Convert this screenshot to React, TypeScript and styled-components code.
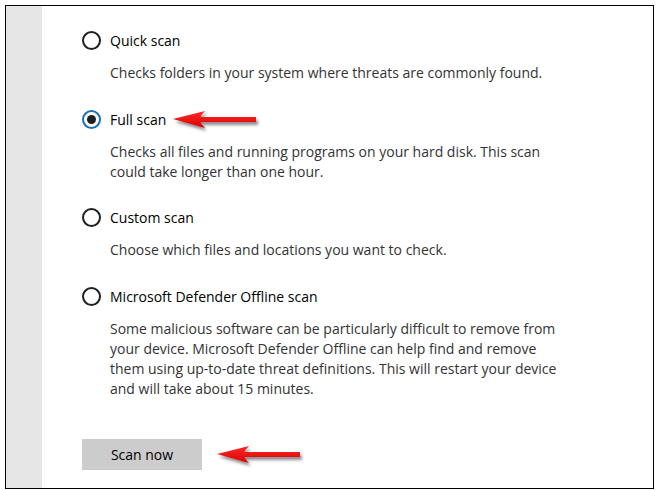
import React from "react";
import styled, { createGlobalStyle } from "styled-components";

const Global = createGlobalStyle`
  html, body { margin: 0; padding: 0; background: #ffffff; }
  body { font-family: "Open Sans", "Noto Sans", sans-serif; }
`;

const Frame = styled.div`
  position: relative;
  box-sizing: border-box;
  margin: 5px 0 0 5px;
  width: 649px;
  height: 484px;
  border: 1px solid #000;
  display: flex;
  background: #fff;
  overflow: hidden;
`;

const Strip = styled.div`
  width: 36px;
  flex: none;
  background: #e6e6e6;
`;

const Content = styled.div`
  flex: 1;
  display: flex;
  flex-direction: column;
  align-items: flex-start;
  padding: 19px 0 0 40px;
`;

const Option = styled.div<{ $gap: number }>`
  display: flex;
  flex-direction: column;
  margin-bottom: ${(p) => p.$gap}px;
`;

const Row = styled.label`
  display: flex;
  align-items: center;
  gap: 9px;
  height: 30px;
  font-size: 14px;
  color: #000;
`;

const Radio = styled.span<{ $checked?: boolean }>`
  box-sizing: border-box;
  width: 19px;
  height: 19px;
  border-radius: 50%;
  border: 2px solid ${(p) => (p.$checked ? "#1a6fb5" : "#1f1f1f")};
  display: flex;
  align-items: center;
  justify-content: center;
  flex: none;
  &::after {
    content: "";
    display: ${(p) => (p.$checked ? "block" : "none")};
    width: 9px;
    height: 9px;
    border-radius: 50%;
    background: #1f1f1f;
  }
`;

const Desc = styled.p`
  margin: 8px 0 0 28px;
  font-size: 14px;
  line-height: 20px;
  color: #333;
  width: 470px;
`;

const ScanButton = styled.button`
  margin-top: 40px;
  width: 120px;
  height: 31px;
  border: none;
  background: #cccccc;
  font-family: "Open Sans", "Noto Sans", sans-serif;
  font-size: 14px;
  color: #000;
  padding: 0;
`;

const ArrowWrap = styled.svg<{ $x: number; $y: number }>`
  position: absolute;
  left: ${(p) => p.$x}px;
  top: ${(p) => p.$y}px;
  overflow: visible;
`;

function Arrow({ x, y }: { x: number; y: number }) {
  return (
    <ArrowWrap $x={x} $y={y} width="90" height="24" viewBox="0 0 90 24">
      <defs>
        <filter id={`sh${x}`} x="-20%" y="-50%" width="140%" height="200%">
          <feGaussianBlur in="SourceAlpha" stdDeviation="1.6" />
          <feOffset dx="2" dy="3" result="b" />
          <feComponentTransfer>
            <feFuncA type="linear" slope="0.45" />
          </feComponentTransfer>
          <feMerge>
            <feMergeNode />
            <feMergeNode in="SourceGraphic" />
          </feMerge>
        </filter>
        <linearGradient id={`g${x}`} x1="0" y1="0" x2="0" y2="1">
          <stop offset="0" stopColor="#ff2a2a" />
          <stop offset="1" stopColor="#d90000" />
        </linearGradient>
      </defs>
      <path
        filter={`url(#sh${x})`}
        fill={`url(#g${x})`}
        d="M1 11 L33 3 Q28 8 29 9 L84 9 L84 14 L29 14 Q28 15 33 20 Z"
      />
    </ArrowWrap>
  );
}

const options = [
  {
    label: "Quick scan",
    desc: ["Checks folders in your system where threats are commonly found."],
    gap: 21,
  },
  {
    label: "Full scan",
    checked: true,
    desc: [
      "Checks all files and running programs on your hard disk. This scan",
      "could take longer than one hour.",
    ],
    gap: 20,
  },
  {
    label: "Custom scan",
    desc: ["Choose which files and locations you want to check."],
    gap: 21,
  },
  {
    label: "Microsoft Defender Offline scan",
    desc: [
      "Some malicious software can be particularly difficult to remove from",
      "your device. Microsoft Defender Offline can help find and remove",
      "them using up-to-date threat definitions. This will restart your device",
      "and will take about 15 minutes.",
    ],
    gap: 0,
  },
];

export default function App() {
  return (
    <>
      <Global />
      <Frame>
        <Strip />
        <Content>
          {options.map((o) => (
            <Option key={o.label} $gap={o.gap}>
              <Row>
                <Radio $checked={o.checked} />
                {o.label}
              </Row>
              <Desc>
                {o.desc.map((l, i) => (
                  <React.Fragment key={i}>
                    {l}
                    {i < o.desc.length - 1 && <br />}
                  </React.Fragment>
                ))}
              </Desc>
            </Option>
          ))}
          <ScanButton>Scan now</ScanButton>
        </Content>
        <Arrow x={166} y={102} />
        <Arrow x={210} y={437} />
      </Frame>
    </>
  );
}
